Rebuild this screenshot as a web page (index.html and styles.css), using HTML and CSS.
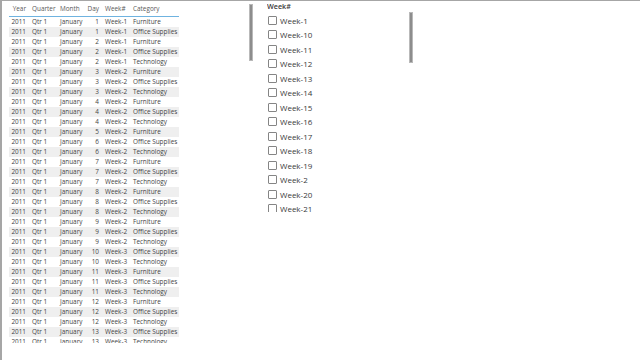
FILE: index.html
```html
<!DOCTYPE html>
<html lang="en">
<head>
<meta charset="utf-8">
<title>Report</title>
<link rel="stylesheet" href="styles.css">
</head>
<body>
<div class="frame">
  <section class="tablevis">
    <div class="grid">
      <div class="row hdr"><span class="r">Year</span><span>Quarter</span><span>Month</span><span class="r">Day</span><span>Week#</span><span>Category</span></div>
      <div class="row"><span class="r">2011</span><span>Qtr 1</span><span>January</span><span class="r">1</span><span>Week-1</span><span>Furniture</span></div>
      <div class="row"><span class="r">2011</span><span>Qtr 1</span><span>January</span><span class="r">1</span><span>Week-1</span><span>Office Supplies</span></div>
      <div class="row"><span class="r">2011</span><span>Qtr 1</span><span>January</span><span class="r">2</span><span>Week-1</span><span>Furniture</span></div>
      <div class="row"><span class="r">2011</span><span>Qtr 1</span><span>January</span><span class="r">2</span><span>Week-1</span><span>Office Supplies</span></div>
      <div class="row"><span class="r">2011</span><span>Qtr 1</span><span>January</span><span class="r">2</span><span>Week-1</span><span>Technology</span></div>
      <div class="row"><span class="r">2011</span><span>Qtr 1</span><span>January</span><span class="r">3</span><span>Week-2</span><span>Furniture</span></div>
      <div class="row"><span class="r">2011</span><span>Qtr 1</span><span>January</span><span class="r">3</span><span>Week-2</span><span>Office Supplies</span></div>
      <div class="row"><span class="r">2011</span><span>Qtr 1</span><span>January</span><span class="r">3</span><span>Week-2</span><span>Technology</span></div>
      <div class="row"><span class="r">2011</span><span>Qtr 1</span><span>January</span><span class="r">4</span><span>Week-2</span><span>Furniture</span></div>
      <div class="row"><span class="r">2011</span><span>Qtr 1</span><span>January</span><span class="r">4</span><span>Week-2</span><span>Office Supplies</span></div>
      <div class="row"><span class="r">2011</span><span>Qtr 1</span><span>January</span><span class="r">4</span><span>Week-2</span><span>Technology</span></div>
      <div class="row"><span class="r">2011</span><span>Qtr 1</span><span>January</span><span class="r">5</span><span>Week-2</span><span>Furniture</span></div>
      <div class="row"><span class="r">2011</span><span>Qtr 1</span><span>January</span><span class="r">6</span><span>Week-2</span><span>Office Supplies</span></div>
      <div class="row"><span class="r">2011</span><span>Qtr 1</span><span>January</span><span class="r">6</span><span>Week-2</span><span>Technology</span></div>
      <div class="row"><span class="r">2011</span><span>Qtr 1</span><span>January</span><span class="r">7</span><span>Week-2</span><span>Furniture</span></div>
      <div class="row"><span class="r">2011</span><span>Qtr 1</span><span>January</span><span class="r">7</span><span>Week-2</span><span>Office Supplies</span></div>
      <div class="row"><span class="r">2011</span><span>Qtr 1</span><span>January</span><span class="r">7</span><span>Week-2</span><span>Technology</span></div>
      <div class="row"><span class="r">2011</span><span>Qtr 1</span><span>January</span><span class="r">8</span><span>Week-2</span><span>Furniture</span></div>
      <div class="row"><span class="r">2011</span><span>Qtr 1</span><span>January</span><span class="r">8</span><span>Week-2</span><span>Office Supplies</span></div>
      <div class="row"><span class="r">2011</span><span>Qtr 1</span><span>January</span><span class="r">8</span><span>Week-2</span><span>Technology</span></div>
      <div class="row"><span class="r">2011</span><span>Qtr 1</span><span>January</span><span class="r">9</span><span>Week-2</span><span>Furniture</span></div>
      <div class="row"><span class="r">2011</span><span>Qtr 1</span><span>January</span><span class="r">9</span><span>Week-2</span><span>Office Supplies</span></div>
      <div class="row"><span class="r">2011</span><span>Qtr 1</span><span>January</span><span class="r">9</span><span>Week-2</span><span>Technology</span></div>
      <div class="row"><span class="r">2011</span><span>Qtr 1</span><span>January</span><span class="r">10</span><span>Week-3</span><span>Office Supplies</span></div>
      <div class="row"><span class="r">2011</span><span>Qtr 1</span><span>January</span><span class="r">10</span><span>Week-3</span><span>Technology</span></div>
      <div class="row"><span class="r">2011</span><span>Qtr 1</span><span>January</span><span class="r">11</span><span>Week-3</span><span>Furniture</span></div>
      <div class="row"><span class="r">2011</span><span>Qtr 1</span><span>January</span><span class="r">11</span><span>Week-3</span><span>Office Supplies</span></div>
      <div class="row"><span class="r">2011</span><span>Qtr 1</span><span>January</span><span class="r">11</span><span>Week-3</span><span>Technology</span></div>
      <div class="row"><span class="r">2011</span><span>Qtr 1</span><span>January</span><span class="r">12</span><span>Week-3</span><span>Furniture</span></div>
      <div class="row"><span class="r">2011</span><span>Qtr 1</span><span>January</span><span class="r">12</span><span>Week-3</span><span>Office Supplies</span></div>
      <div class="row"><span class="r">2011</span><span>Qtr 1</span><span>January</span><span class="r">12</span><span>Week-3</span><span>Technology</span></div>
      <div class="row"><span class="r">2011</span><span>Qtr 1</span><span>January</span><span class="r">13</span><span>Week-3</span><span>Office Supplies</span></div>
      <div class="row"><span class="r">2011</span><span>Qtr 1</span><span>January</span><span class="r">13</span><span>Week-3</span><span>Technology</span></div>
    </div>
  </section>
  <div class="vbar tbar"></div>
  <section class="slicer">
    <div class="stitle">Week#</div>
    <ul class="items">
      <li><span class="box"></span>Week-1</li>
      <li><span class="box"></span>Week-10</li>
      <li><span class="box"></span>Week-11</li>
      <li><span class="box"></span>Week-12</li>
      <li><span class="box"></span>Week-13</li>
      <li><span class="box"></span>Week-14</li>
      <li><span class="box"></span>Week-15</li>
      <li><span class="box"></span>Week-16</li>
      <li><span class="box"></span>Week-17</li>
      <li><span class="box"></span>Week-18</li>
      <li><span class="box"></span>Week-19</li>
      <li><span class="box"></span>Week-2</li>
      <li><span class="box"></span>Week-20</li>
      <li><span class="box"></span>Week-21</li>
    </ul>
  </section>
  <div class="vbar sbar"></div>
</div>
</body>
</html>
```

FILE: styles.css
```css
html, body {
  margin: 0;
  padding: 0;
  background: #ffffff;
}

body {
  font-family: "Open Sans", "Noto Sans", sans-serif;
  color: #333333;
}

.frame {
  display: flex;
  align-items: flex-start;
  width: 640px;
  height: 360px;
  box-sizing: border-box;
  border-top: 1px solid #a6a6a6;
  border-left: 2px solid #a6a6a6;
  overflow: hidden;
}

.tablevis {
  flex: 0 0 240px;
  padding-left: 7px;
}

.grid {
  width: 170px;
  height: 342px;
  overflow: hidden;
}

.row {
  display: grid;
  grid-template-columns: 20px 28px 28px 17px 28px 49px;
  height: 10px;
  font-size: 6.4px;
  line-height: 10px;
  color: #444444;
  white-space: nowrap;
}

.row span {
  padding-left: 3px;
  overflow: hidden;
}

.row span.r {
  text-align: right;
  padding-left: 0;
  padding-right: 3px;
}

.row:nth-child(odd) {
  background: #efefef;
}

.row.hdr {
  height: 15px;
  line-height: 15px;
  background: #ffffff;
  color: #595959;
  border-bottom: 1px solid #6fb3e0;
}

.vbar {
  flex: 0 0 auto;
  width: 4px;
  box-sizing: border-box;
  background: #8d8d8d;
  border: 1px solid #b9b9b9;
}

.tbar {
  margin-top: 3px;
  height: 57px;
}

.slicer {
  flex: 0 0 142px;
  margin-left: 14px;
  height: 211px;
  overflow: hidden;
}

.stitle {
  font-size: 7.2px;
  font-weight: 600;
  color: #3a3a3a;
  height: 11px;
  line-height: 11px;
}

.items {
  list-style: none;
  margin: 0;
  padding: 0;
  padding-top: 1px;
}

.items li {
  display: flex;
  align-items: center;
  height: 14.5px;
  font-size: 8px;
  color: #3a3a3a;
  padding-left: 1px;
}

.box {
  width: 9px;
  height: 9px;
  box-sizing: border-box;
  border: 1px solid #858585;
  border-radius: 1px;
  margin-right: 3px;
  background: #ffffff;
}

.sbar {
  margin-top: 11px;
  height: 51px;
}
```
